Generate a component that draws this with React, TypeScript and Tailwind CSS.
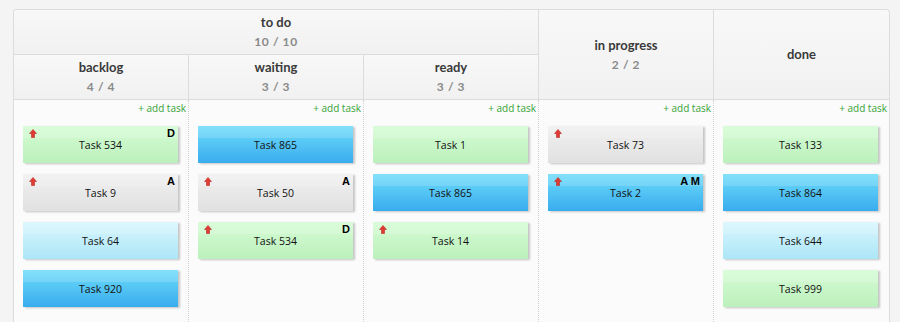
import React from "react";

type Tone = "green" | "gray" | "blue" | "sky";

interface Task {
  name: string;
  tone: Tone;
  urgent?: boolean;
  tag?: string;
}

const toneClass: Record<Tone, string> = {
  green: "bg-linear-to-b from-[#d4fcd4] to-[#bdf0bd]",
  gray: "bg-linear-to-b from-[#f0f0f0] to-[#e1e1e1]",
  blue: "bg-linear-to-b from-[#6ddcfa] to-[#38acee]",
  sky: "bg-linear-to-b from-[#d8f6fe] to-[#ace6f7]",
};

const columns: Task[][] = [
  [
    { name: "Task 534", tone: "green", urgent: true, tag: "D" },
    { name: "Task 9", tone: "gray", urgent: true, tag: "A" },
    { name: "Task 64", tone: "sky" },
    { name: "Task 920", tone: "blue" },
  ],
  [
    { name: "Task 865", tone: "blue" },
    { name: "Task 50", tone: "gray", urgent: true, tag: "A" },
    { name: "Task 534", tone: "green", urgent: true, tag: "D" },
  ],
  [
    { name: "Task 1", tone: "green" },
    { name: "Task 865", tone: "blue" },
    { name: "Task 14", tone: "green", urgent: true },
  ],
  [
    { name: "Task 73", tone: "gray", urgent: true },
    { name: "Task 2", tone: "blue", urgent: true, tag: "A M" },
  ],
  [
    { name: "Task 133", tone: "green" },
    { name: "Task 864", tone: "blue" },
    { name: "Task 644", tone: "sky" },
    { name: "Task 999", tone: "green" },
  ],
];

const UpArrow = () => (
  <svg width="8" height="9" viewBox="0 0 8 9" className="absolute left-[6px] top-[3px]">
    <path d="M4 0.5 L7.5 4.5 L5.5 4.5 L5.5 8.5 L2.5 8.5 L2.5 4.5 L0.5 4.5 Z" fill="#e23a32" stroke="#b82a24" strokeWidth="0.6" />
  </svg>
);

const Card = ({ task }: { task: Task }) => (
  <div
    className={`relative flex h-[37px] w-[155px] items-center justify-center pt-[2px] text-[10.5px] text-[#111] shadow-[2px_1px_2px_rgba(0,0,0,0.22)] ${toneClass[task.tone]}`}
    style={{ fontFamily: '"Open Sans", sans-serif' }}
  >
    <div className="absolute inset-x-0 top-0 h-[12px] bg-white/15" />
    {task.urgent && <UpArrow />}
    {task.tag && (
      <span className="absolute right-[3px] top-[1px] text-[11px] font-bold leading-[13px] text-black" style={{ fontFamily: '"Liberation Sans", sans-serif' }}>
        {task.tag}
      </span>
    )}
    <span className="relative">{task.name}</span>
  </div>
);

const Heading = ({ title, count }: { title: string; count?: string }) => (
  <div className="flex h-full flex-col items-center justify-center bg-linear-to-b from-[#f8f8f8] to-[#f1f1f1] leading-[19px]">
    <span className="text-[13px] font-bold text-[#3a3a3a]">{title}</span>
    {count && <span className="text-[12px] font-bold tracking-[0.6px] text-[#8a8a8a]">{count}</span>}
  </div>
);

export default function App() {
  return (
    <div className="h-[322px] w-[900px] overflow-hidden bg-[#f4f4f4] pl-[13px] pt-[9px]" style={{ fontFamily: "Lato, sans-serif" }}>
      <div className="w-[877px] rounded-t-[4px] border border-b-0 border-[#dcdcdc] bg-[#fbfbfb]">
        <div className="grid grid-cols-[175px_175px_175px_175px_175px] grid-rows-[45px_44px] overflow-hidden rounded-t-[4px] border-b border-[#dcdcdc]">
          <div className="col-span-3 border-b border-r border-[#dcdcdc]">
            <Heading title="to do" count="10 / 10" />
          </div>
          <div className="row-span-2 border-r border-[#dcdcdc]">
            <Heading title="in progress" count="2 / 2" />
          </div>
          <div className="row-span-2">
            <Heading title="done" />
          </div>
          <div className="border-r border-[#dcdcdc]">
            <Heading title="backlog" count="4 / 4" />
          </div>
          <div className="border-r border-[#dcdcdc]">
            <Heading title="waiting" count="3 / 3" />
          </div>
          <div className="border-r border-[#dcdcdc]">
            <Heading title="ready" count="3 / 3" />
          </div>
        </div>
        <div className="flex h-[240px]">
          {columns.map((tasks, i) => (
            <div
              key={i}
              className={`w-[175px] pl-[9px] ${i < 4 ? "border-r border-dotted border-[#d0d0d0]" : ""}`}
            >
              <div className="h-[26px] pr-[2px] pt-[1px] text-right text-[10px] leading-[15px] text-[#36a336]" style={{ fontFamily: '"Open Sans", sans-serif' }}>
                + add task
              </div>
              <div className="flex flex-col gap-[11px]">
                {tasks.map((t, j) => (
                  <Card key={j} task={t} />
                ))}
              </div>
            </div>
          ))}
        </div>
      </div>
    </div>
  );
}
